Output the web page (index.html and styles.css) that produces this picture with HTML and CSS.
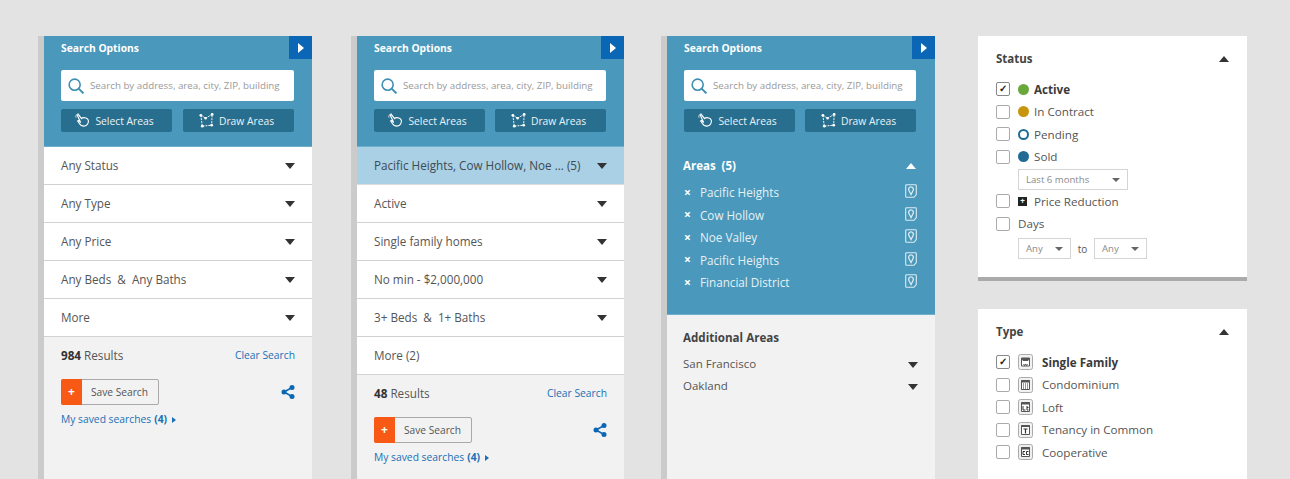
FILE: index.html
```html
<!DOCTYPE html>
<html lang="en">
<head>
<meta charset="utf-8">
<title>Search Options</title>
<link rel="stylesheet" href="styles.css">
</head>
<body>
<svg class="defs" width="0" height="0" aria-hidden="true">
  <symbol id="i-search" viewBox="0 0 18 18"><circle cx="7.5" cy="7.5" r="6.2" fill="none" stroke="currentColor" stroke-width="1.8"/><path d="M12 12l5.300 5.300" stroke="currentColor" stroke-width="2.200" fill="none"/></symbol>
  <symbol id="i-hand" viewBox="0 0 16 16"><path d="M2.500 2.500l1-1 3.500 4.500 1-.8c2-.6 5.500.2 6.200 2.500.6 2.500-1 6.300-4.500 6.300-2.500 0-4-1-5-2.800L2.800 8.500l1.200-.6 2 2.300z" fill="none" stroke="currentColor" stroke-width="1.200"/><path d="M1 5C.5 3 1.500 1 3.500.8" fill="none" stroke="currentColor" stroke-width=".8"/></symbol>
  <symbol id="i-draw" viewBox="0 0 16 16"><path d="M2 2.500l5 3 7-4-.5 11.500-10 1z" fill="none" stroke="currentColor" stroke-width="1" stroke-dasharray="2 1"/><g fill="currentColor"><circle cx="2" cy="2.500" r="1.500"/><circle cx="7" cy="5.500" r="1.300"/><circle cx="14" cy="1.500" r="1.500"/><circle cx="13.500" cy="13" r="1.500"/><circle cx="3.500" cy="14" r="1.500"/></g></symbol>
  <symbol id="i-share" viewBox="0 0 14 14"><path d="M11 2.500L3 7l8 4.500" fill="none" stroke="currentColor" stroke-width="1.500"/><circle cx="11" cy="2.500" r="2.500" fill="currentColor"/><circle cx="3" cy="7" r="2.500" fill="currentColor"/><circle cx="11" cy="11.500" r="2.500" fill="currentColor"/></symbol>
  <symbol id="i-pin" viewBox="0 0 12 14"><path d="M1.500.7h9a.8.8 0 0 1 .8.8v9L9 13.300H1.500a.8.8 0 0 1-.8-.8v-11a.8.8 0 0 1 .8-.8z" fill="none" stroke="currentColor" stroke-width="1.100"/><path d="M6 10.500L3.900 6.500a2.400 2.400 0 1 1 4.200 0z" fill="none" stroke="currentColor" stroke-width="1.300"/></symbol>
  <symbol id="i-house" viewBox="0 0 15 16"><rect x=".5" y=".5" width="14" height="15" rx="2" fill="#f1f1f1" stroke="#aaa"/><path d="M3.500 4h8v8h-8z" fill="#fff" stroke="#555"/><path d="M3 4h9l-2 3H5z" fill="#555"/><path d="M5.500 10l1 1.500 1-1.500 1 1.500 1-1.500" fill="none" stroke="#333" stroke-width=".8"/></symbol>
  <symbol id="i-condo" viewBox="0 0 15 16"><rect x=".5" y=".5" width="14" height="15" rx="2" fill="#f1f1f1" stroke="#aaa"/><path d="M3.500 3.500h8v9h-8z" fill="#fff" stroke="#555"/><path d="M3 3.500h9v2H3z" fill="#555"/><path d="M5 7h5M5 9h5M5 11h5" stroke="#333" stroke-dasharray="1 1"/></symbol>
  <symbol id="i-loft" viewBox="0 0 15 16"><rect x=".5" y=".5" width="14" height="15" rx="2" fill="#f1f1f1" stroke="#aaa"/><path d="M3.500 3.500h8v9h-8z" fill="#fff" stroke="#555"/><path d="M3 3.500h9v2H3z" fill="#555"/><path d="M5 7v4h2.500M9 7v4h1.500M9 8.500h1.500" fill="none" stroke="#333"/></symbol>
  <symbol id="i-tic" viewBox="0 0 15 16"><rect x=".5" y=".5" width="14" height="15" rx="2" fill="#f1f1f1" stroke="#aaa"/><path d="M3.500 3.500h8v9h-8z" fill="#fff" stroke="#555"/><path d="M3 3.500h9v1.500H3z" fill="#555"/><path d="M5.500 7h4M7.500 7v4.500" fill="none" stroke="#333" stroke-width="1.200"/></symbol>
  <symbol id="i-coop" viewBox="0 0 15 16"><rect x=".5" y=".5" width="14" height="15" rx="2" fill="#eee" stroke="#aaa"/><path d="M3.500 3.500h8v9h-8z" fill="#fff" stroke="#555"/><path d="M3 3.500h9v2H3z" fill="#555"/><path d="M7 7.500H5v3h2M10.500 7.500h-2v3h2" fill="none" stroke="#333"/></symbol>
</svg>

<main class="page">

  <section class="panel">
    <header class="head">
      <div class="head-title">Search Options</div>
      <span class="toggle"><i class="tri-right"></i></span>
      <div class="search"><svg class="search-icon"><use href="#i-search"/></svg><span>Search by address, area, city, ZIP, building</span></div>
      <div class="actions">
        <span class="action"><svg class="action-icon"><use href="#i-hand"/></svg>Select Areas</span>
        <span class="action"><svg class="action-icon"><use href="#i-draw"/></svg>Draw Areas</span>
      </div>
    </header>
    <div class="row"><span>Any Status</span><i class="tri-down"></i></div>
    <div class="row"><span>Any Type</span><i class="tri-down"></i></div>
    <div class="row"><span>Any Price</span><i class="tri-down"></i></div>
    <div class="row"><span>Any Beds &nbsp;&amp;&nbsp; Any Baths</span><i class="tri-down"></i></div>
    <div class="row"><span>More</span><i class="tri-down"></i></div>
    <div class="results"><span><b>984</b> Results</span><a class="link small">Clear Search</a></div>
    <div class="save-line">
      <span class="save"><span class="save-plus">+</span><span class="save-label">Save Search</span></span>
      <svg class="share"><use href="#i-share"/></svg>
    </div>
    <a class="link saved">My saved searches <b>(4)</b><i class="tri-small"></i></a>
  </section>

  <section class="panel panel-mid">
    <header class="head">
      <div class="head-title">Search Options</div>
      <span class="toggle"><i class="tri-right"></i></span>
      <div class="search"><svg class="search-icon"><use href="#i-search"/></svg><span>Search by address, area, city, ZIP, building</span></div>
      <div class="actions">
        <span class="action"><svg class="action-icon"><use href="#i-hand"/></svg>Select Areas</span>
        <span class="action"><svg class="action-icon"><use href="#i-draw"/></svg>Draw Areas</span>
      </div>
    </header>
    <div class="row row-active"><span>Pacific Heights, Cow Hollow, Noe ... (5)</span><i class="tri-down"></i></div>
    <div class="row"><span>Active</span><i class="tri-down"></i></div>
    <div class="row"><span>Single family homes</span><i class="tri-down"></i></div>
    <div class="row"><span>No min - $2,000,000</span><i class="tri-down"></i></div>
    <div class="row"><span>3+ Beds &nbsp;&amp;&nbsp; 1+ Baths</span><i class="tri-down"></i></div>
    <div class="row"><span>More (2)</span></div>
    <div class="results"><span><b>48</b> Results</span><a class="link small">Clear Search</a></div>
    <div class="save-line">
      <span class="save"><span class="save-plus">+</span><span class="save-label">Save Search</span></span>
      <svg class="share"><use href="#i-share"/></svg>
    </div>
    <a class="link saved">My saved searches <b>(4)</b><i class="tri-small"></i></a>
  </section>

  <section class="panel panel-areas">
    <header class="head head-tall">
      <div class="head-title">Search Options</div>
      <span class="toggle"><i class="tri-right"></i></span>
      <div class="search"><svg class="search-icon"><use href="#i-search"/></svg><span>Search by address, area, city, ZIP, building</span></div>
      <div class="actions">
        <span class="action"><svg class="action-icon"><use href="#i-hand"/></svg>Select Areas</span>
        <span class="action"><svg class="action-icon"><use href="#i-draw"/></svg>Draw Areas</span>
      </div>
      <div class="areas-title"><b>Areas &nbsp;(5)</b><i class="tri-up-white"></i></div>
      <ul class="areas">
        <li><span class="x">×</span><span class="area-name">Pacific Heights</span><svg class="pin"><use href="#i-pin"/></svg></li>
        <li><span class="x">×</span><span class="area-name">Cow Hollow</span><svg class="pin"><use href="#i-pin"/></svg></li>
        <li><span class="x">×</span><span class="area-name">Noe Valley</span><svg class="pin"><use href="#i-pin"/></svg></li>
        <li><span class="x">×</span><span class="area-name">Pacific Heights</span><svg class="pin"><use href="#i-pin"/></svg></li>
        <li><span class="x">×</span><span class="area-name">Financial District</span><svg class="pin"><use href="#i-pin"/></svg></li>
      </ul>
    </header>
    <div class="additional">
      <b class="additional-title">Additional Areas</b>
      <div class="additional-row"><span>San Francisco</span><i class="tri-down"></i></div>
      <div class="additional-row"><span>Oakland</span><i class="tri-down"></i></div>
    </div>
  </section>

  <aside class="side">
    <section class="card card-status">
      <div class="card-title"><b>Status</b><i class="tri-up"></i></div>
      <div class="check-row"><span class="box box-on">✓</span><i class="dot dot-active"></i><b class="strong">Active</b></div>
      <div class="check-row"><span class="box"></span><i class="dot dot-contract"></i><span>In Contract</span></div>
      <div class="check-row"><span class="box"></span><i class="dot dot-pending"></i><span>Pending</span></div>
      <div class="check-row"><span class="box"></span><i class="dot dot-sold"></i><span>Sold</span></div>
      <div class="sub-row sub-months"><span class="select select-wide">Last 6 months<i class="tri-select"></i></span></div>
      <div class="check-row"><span class="box"></span><i class="reduction">+</i><span>Price Reduction</span></div>
      <div class="check-row"><span class="box"></span><span>Days</span></div>
      <div class="sub-row sub-days"><span class="select">Any<i class="tri-select"></i></span><span class="to">to</span><span class="select">Any<i class="tri-select"></i></span></div>
    </section>
    <section class="card card-type">
      <div class="card-title"><b>Type</b><i class="tri-up"></i></div>
      <div class="check-row"><span class="box box-on">✓</span><svg class="type-icon"><use href="#i-house"/></svg><b class="strong">Single Family</b></div>
      <div class="check-row"><span class="box"></span><svg class="type-icon"><use href="#i-condo"/></svg><span>Condominium</span></div>
      <div class="check-row"><span class="box"></span><svg class="type-icon"><use href="#i-loft"/></svg><span>Loft</span></div>
      <div class="check-row"><span class="box"></span><svg class="type-icon"><use href="#i-tic"/></svg><span>Tenancy in Common</span></div>
      <div class="check-row"><span class="box"></span><svg class="type-icon"><use href="#i-coop"/></svg><span>Cooperative</span></div>
    </section>
  </aside>
</main>
</body>
</html>
```

FILE: styles.css
```css
* { box-sizing: border-box; }
html, body { margin: 0; height: 479px; overflow: hidden; }
body { background: #e3e3e3; font-family: "Open Sans", "Liberation Sans", sans-serif; color: #4a4a4a; font-size: 13px; }
.defs { position: absolute; }
b { font-weight: 700; }
i { display: block; flex: none; }

.page { display: flex; align-items: flex-start; padding: 36px 0 0 38px; height: 479px; overflow: hidden; }

.panel { width: 274px; height: 443px; flex: none; background: #f2f2f2; border-left: 6px solid #cbcbcb; margin-right: 39px; }
.panel-mid { width: 273px; margin-right: 37px; }
.panel-areas { margin-right: 43px; }

.head { position: relative; height: 111px; background: #4a98bb; padding: 0 18px 0 17px; border-bottom: 1px solid #6fafcb; }
.head-tall { height: 279px; }
.head-title { color: #fff; font-size: 10.300px; font-weight: 700; line-height: 13px; padding-top: 6px; height: 34px; }
.toggle { position: absolute; top: 0; right: 0; width: 23px; height: 23px; background: #0b66b5; display: flex; align-items: center; justify-content: center; }
.tri-right { width: 0; height: 0; border-left: 6px solid #fff; border-top: 5px solid transparent; border-bottom: 5px solid transparent; margin-left: 1px; }

.search { height: 31px; background: #fff; border-radius: 2px; display: flex; align-items: center; padding-left: 7px; font-size: 9.750px; color: #9a9a9a; white-space: nowrap; }
.search-icon { width: 16px; height: 16px; color: #3f8fb3; margin-right: 6px; flex: none; }

.actions { display: flex; justify-content: space-between; margin-top: 8px; }
.action { width: 111px; height: 23px; padding-right: 4px; background: #286e8e; border-radius: 2px; color: #eaf3f7; font-size: 10.300px; display: flex; align-items: center; justify-content: center; white-space: nowrap; }
.action-icon { width: 15px; height: 15px; margin-right: 5px; color: #fff; flex: none; }

.row { height: 38px; background: #fff; border-bottom: 1px solid #d2d2d2; padding: 0 17px 2px; display: flex; align-items: center; justify-content: space-between; font-size: 11.700px; color: #555; }
.row-active { background: #a9d0e4; color: #3d4a52; border-bottom-color: #dcdcdc; }
.tri-down { width: 0; height: 0; border-top: 6px solid #333; border-left: 5px solid transparent; border-right: 5px solid transparent; margin-top: 3px; }

.results { display: flex; justify-content: space-between; align-items: center; padding: 0 17px; height: 35px; font-size: 11.700px; color: #555; }
.results b { color: #333; }
.link { color: #1b6fb5; font-size: 10.300px; white-space: nowrap; }
.small { font-size: 10.300px; }

.save-line { display: flex; justify-content: space-between; align-items: center; padding: 7px 17px 0; }
.save { display: flex; height: 26px; border: 1px solid #a9a9a9; border-radius: 2px; background: #f2f2f2; }
.save-plus { width: 21px; margin: -1px 0 -1px -1px; background: #f85a15; color: #fff; font-weight: 700; font-size: 12px; line-height: 26px; text-align: center; border-radius: 2px 0 0 2px; }
.save-label { padding: 0 10px 0 9px; font-size: 10.200px; line-height: 24px; color: #555; }
.share { width: 14px; height: 14px; color: #0b66b5; }

.saved { display: flex; align-items: center; padding: 7px 17px 0; line-height: 15px; }
.saved b { margin-left: 3px; }
.tri-small { width: 0; height: 0; border-left: 4px solid #1b6fb5; border-top: 3px solid transparent; border-bottom: 3px solid transparent; margin-left: 5px; }

.panel-areas .head { padding-right: 19px; }
.areas-title { display: flex; justify-content: space-between; align-items: center; color: #fff; font-size: 11.500px; margin: 25px 0 0 -1px; line-height: 18px; }
.tri-up-white { width: 0; height: 0; border-bottom: 6px solid #fff; border-left: 5px solid transparent; border-right: 5px solid transparent; margin-right: 0; }
.areas { list-style: none; margin: 6px 0 0; padding: 0; }
.areas li { height: 22.500px; display: flex; align-items: center; color: #e6f1f6; font-size: 11.700px; }
.x { width: 16px; color: #fff; font-weight: 700; font-size: 12px; }
.area-name { flex: 1; }
.pin { width: 12px; height: 14px; color: #dcebf2; margin-top: -2px; margin-right: -1px; }

.additional { padding: 14px 17px 0 16px; }
.additional-title { display: block; font-size: 11.600px; color: #444; line-height: 18px; margin-bottom: 5px; }
.additional-row { display: flex; justify-content: space-between; align-items: center; height: 22.500px; font-size: 11.500px; color: #555; }

.side { width: 269px; flex: none; }
.card { background: #fff; padding: 13px 18px 0; }
.card-status { height: 245px; border-bottom: 4px solid #aaa; margin-bottom: 28px; }
.card-type { height: 170px; }
.card-title { display: flex; justify-content: space-between; align-items: center; height: 19px; font-size: 11.500px; color: #444; margin-bottom: 10px; }
.tri-up { width: 0; height: 0; border-bottom: 6px solid #333; border-left: 5px solid transparent; border-right: 5px solid transparent; }

.check-row { display: flex; align-items: center; height: 22.500px; font-size: 11.650px; color: #555; white-space: nowrap; }
.box { width: 14px; height: 14px; border: 1.500px solid #aaa; border-radius: 2px; margin-right: 8px; flex: none; font-size: 10px; font-weight: 700; line-height: 11px; text-align: center; color: #222; background: #fff; }
.box-on { border-color: #888; }
.strong { color: #3b3b3b; }
.dot { width: 11px; height: 11px; border-radius: 50%; margin-right: 5px; }
.dot-active { background: #6aa83b; }
.dot-contract { background: #c8950f; }
.dot-pending { background: #fff; border: 2px solid #1f6b93; }
.dot-sold { background: #1f6b93; }
.reduction { width: 9px; height: 9px; background: #222; color: #fff; font-style: normal; font-weight: 700; font-size: 8px; line-height: 8px; text-align: center; margin-right: 7px; }
.type-icon { width: 15px; height: 16px; margin-right: 9px; flex: none; }

.sub-row { display: flex; align-items: center; padding-left: 22px; height: 21px; }
.sub-months { margin-top: 1px; }
.sub-days { margin-top: 3px; }
.check-row + .sub-days { margin-top: 3px; }
.select { display: flex; align-items: center; justify-content: space-between; width: 53px; height: 21px; border: 1px solid #d4d4d4; font-size: 9.600px; color: #8a8a8a; padding: 0 6px 0 7px; }
.select-wide { width: 110px; }
.tri-select { width: 0; height: 0; border-top: 4px solid #666; border-left: 4px solid transparent; border-right: 4px solid transparent; margin-right: 1px; margin-top: 1px; }
.to { width: 23px; text-align: center; font-size: 10px; color: #555; }
```
